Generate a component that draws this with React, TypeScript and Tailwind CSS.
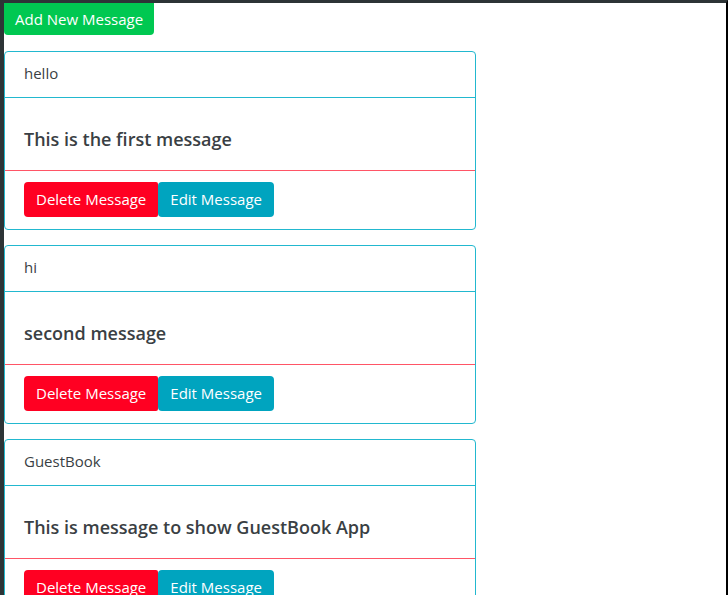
const messages = [
  { id: 1, name: "hello", text: "This is the first message" },
  { id: 2, name: "hi", text: "second message" },
  { id: 3, name: "GuestBook", text: "This is message to show GuestBook App" },
];

const MessageCard = ({ name, text }: { name: string; text: string }) => {
  return (
    <div className="w-[472px] border border-[#22b8cf] rounded-[4px] bg-white">
      {/* Header */}
      <div className="h-[46px] px-[19px] pb-[2px] flex items-center border-b border-[#22b8cf] text-[15px] text-[#3a3f44]">
        {name}
      </div>
      {/* Body */}
      <div className="h-[73px] px-[19px] pt-[29px] border-b border-[#ff5566]">
        <h5 className="text-[18px] leading-[24px] font-semibold text-[#3a3f44]">{text}</h5>
      </div>
      {/* Footer */}
      <div className="px-[19px] pt-[11px] pb-[12px] flex">
        <button className="h-[35px] px-[12px] bg-[#ff0022] text-white text-[15px] rounded-l-[4px] rounded-r-[2px]">
          Delete Message
        </button>
        <button className="h-[35px] px-[12px] bg-[#00a4bf] text-white text-[15px] rounded-[4px]">
          Edit Message
        </button>
      </div>
    </div>
  );
};

export default function App() {
  return (
    <div
      className="h-[595px] overflow-hidden bg-white border-t-[3px] border-l-[4px] border-r-[2px] border-t-[#2d3436] border-l-[#2d3436] border-r-black"
      style={{ fontFamily: '"Open Sans", "Noto Sans", sans-serif' }}
    >
      <button className="h-[32px] px-[11px] bg-[#00c851] text-white text-[15px] rounded-b-[4px]">
        Add New Message
      </button>
      <div className="mt-[16px] flex flex-col gap-[15px]">
        {messages.map((m) => (
          <MessageCard key={m.id} name={m.name} text={m.text} />
        ))}
      </div>
    </div>
  );
}
